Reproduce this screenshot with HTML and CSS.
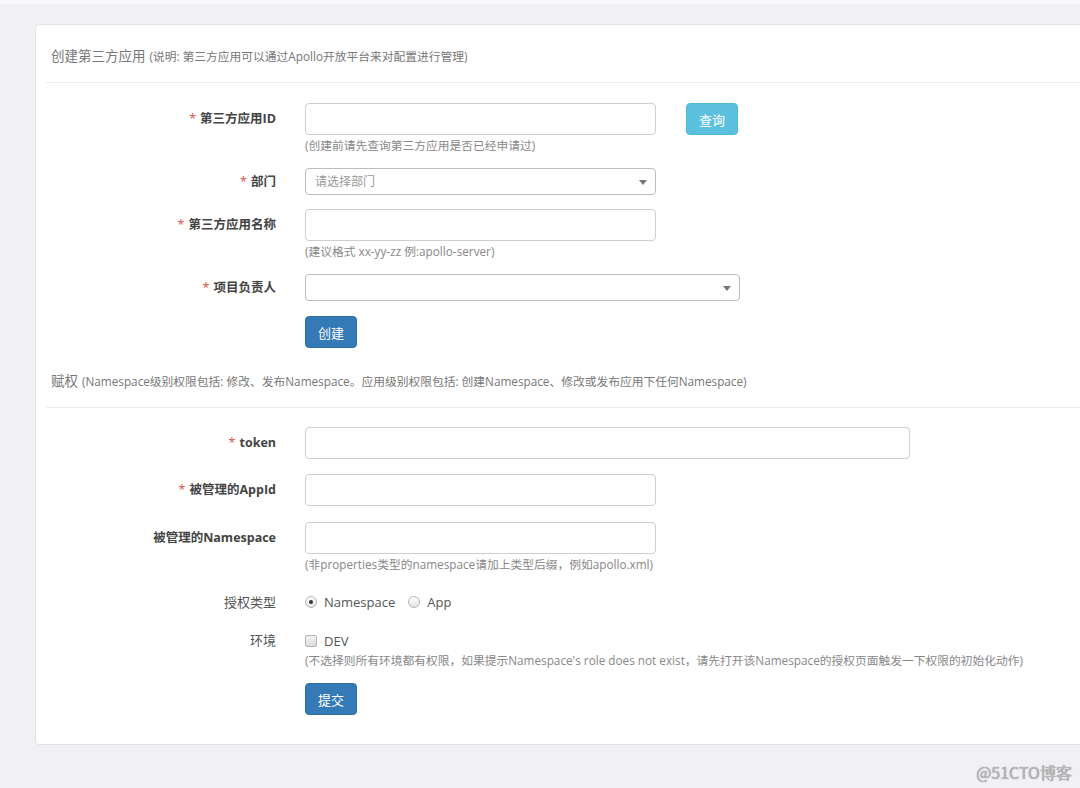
FILE: index.html
```html
<!DOCTYPE html>
<html lang="zh-CN">
<head>
<meta charset="utf-8">
<title>开放平台</title>
<link rel="stylesheet" href="styles.css">
</head>
<body>
<div class="topbar"></div>
<div class="card">
  <div class="section-title"><span class="title-main">创建第三方应用</span> <small class="title-note">(说明: 第三方应用可以通过Apollo开放平台来对配置进行管理)</small></div>
  <form class="form">
    <div class="form-row">
      <label class="form-label req">第三方应用ID</label>
      <div class="form-field">
        <div class="inline">
          <input class="input w-md" type="text">
          <button type="button" class="btn btn-info">查询</button>
        </div>
        <p class="help">(创建前请先查询第三方应用是否已经申请过)</p>
      </div>
    </div>
    <div class="form-row select-row">
      <label class="form-label req sel">部门</label>
      <div class="form-field">
        <div class="select w-md"><span class="placeholder">请选择部门</span><span class="caret"></span></div>
      </div>
    </div>
    <div class="form-row">
      <label class="form-label req">第三方应用名称</label>
      <div class="form-field">
        <input class="input w-md" type="text">
        <p class="help">(建议格式 xx-yy-zz 例:apollo-server)</p>
      </div>
    </div>
    <div class="form-row">
      <label class="form-label req sel">项目负责人</label>
      <div class="form-field">
        <div class="select w-lg"><span class="caret"></span></div>
      </div>
    </div>
    <div class="form-row last">
      <span></span>
      <div class="form-field"><button type="button" class="btn btn-primary">创建</button></div>
    </div>
  </form>

  <div class="section-title second"><span class="title-main">赋权</span> <small class="title-note">(Namespace级别权限包括: 修改、发布Namespace。应用级别权限包括: 创建Namespace、修改或发布应用下任何Namespace)</small></div>
  <form class="form second">
    <div class="form-row">
      <label class="form-label req">token</label>
      <div class="form-field"><input class="input w-xl" type="text"></div>
    </div>
    <div class="form-row appid-row">
      <label class="form-label req">被管理的AppId</label>
      <div class="form-field"><input class="input w-md" type="text"></div>
    </div>
    <div class="form-row">
      <label class="form-label">被管理的Namespace</label>
      <div class="form-field">
        <input class="input w-md" type="text">
        <p class="help">(非properties类型的namespace请加上类型后缀，例如apollo.xml)</p>
      </div>
    </div>
    <div class="form-row radio-row">
      <label class="form-label light">授权类型</label>
      <div class="form-field choices">
        <span class="choice"><span class="radio checked"></span>Namespace</span>
        <span class="choice"><span class="radio"></span>App</span>
      </div>
    </div>
    <div class="form-row env-row">
      <label class="form-label light">环境</label>
      <div class="form-field">
        <span class="choice"><span class="checkbox"></span>DEV</span>
        <p class="help tight">(不选择则所有环境都有权限，如果提示Namespace's role does not exist，请先打开该Namespace的授权页面触发一下权限的初始化动作)</p>
      </div>
    </div>
    <div class="form-row last">
      <span></span>
      <div class="form-field"><button type="button" class="btn btn-primary">提交</button></div>
    </div>
  </form>
</div>
<div class="footer"><span class="watermark">@51CTO博客</span></div>
</body>
</html>
```
FILE: styles.css
```css
html, body {
  margin: 0;
  padding: 0;
}
body {
  background: #f0f0f5;
  font-family: "Open Sans", "Noto Sans CJK SC", sans-serif;
  color: #555;
  width: 1080px;
  height: 788px;
  overflow: hidden;
}
.topbar {
  height: 4px;
  background: #f9f9fb;
}
.card {
  margin: 20px 0 0 35px;
  width: 1070px;
  background: #fff;
  border: 1px solid #e2e2e8;
  border-radius: 4px;
  padding: 0 0 29px 10px;
  box-sizing: border-box;
}
.section-title {
  display: flex;
  align-items: baseline;
  gap: 4px;
  height: 16px;
  padding: 23px 0 18px 5px;
  line-height: 16px;
  border-bottom: 1px solid #ededf0;
  color: #777;
  white-space: nowrap;
}
.section-title.second {
  padding-top: 25px;
}
.title-main {
  font-size: 13.5px;
  line-height: 16px;
}
.title-note {
  font-size: 11.75px;
  line-height: 16px;
}
.form {
  margin: 20px 0 0 0;
}
.form.second {
  margin-top: 19px;
}
.form-row {
  display: grid;
  grid-template-columns: 230px 1fr;
  column-gap: 29px;
  margin-bottom: 15px;
}
.form-row.select-row {
  margin-bottom: 14px;
}
.form-row.appid-row {
  margin-bottom: 16px;
}
.form-row.last {
  margin-bottom: 0;
}
.form-label {
  text-align: right;
  font-size: 12.5px;
  font-weight: 700;
  color: #444;
  line-height: 32px;
  white-space: nowrap;
}
.form-label.sel {
  line-height: 27px;
}
.form-label.light {
  font-weight: 400;
  font-size: 13px;
  color: #555;
}
.form-label.req::before {
  content: "*";
  color: #d9534f;
  margin-right: 4px;
  font-weight: 400;
}
.form-field {
  min-width: 0;
}
.inline {
  display: flex;
  align-items: center;
  gap: 30px;
}
.input {
  display: block;
  height: 32px;
  box-sizing: border-box;
  border: 1px solid #cfcfcf;
  border-radius: 4px;
  background: #fff;
  margin: 0;
  padding: 0 9px;
  font: inherit;
}
.w-md { width: 351px; }
.w-lg { width: 435px; }
.w-xl { width: 605px; }
.select {
  position: relative;
  height: 27px;
  box-sizing: border-box;
  border: 1px solid #bdbdbd;
  border-radius: 4px;
  background: #fff;
  padding-left: 9px;
  line-height: 25px;
  font-size: 12px;
}
.placeholder {
  color: #999;
}
.caret {
  position: absolute;
  right: 8px;
  top: 11px;
  width: 0;
  height: 0;
  border-left: 4px solid transparent;
  border-right: 4px solid transparent;
  border-top: 5px solid #777;
}
.help {
  margin: 2px 0 0 0;
  font-size: 11.75px;
  line-height: 16px;
  color: #888;
  white-space: nowrap;
}
.help.tight {
  margin-top: 0;
}
.btn {
  height: 32px;
  width: 52px;
  box-sizing: border-box;
  border-radius: 4px;
  color: #fff;
  font-family: inherit;
  font-size: 13px;
  padding: 0;
  cursor: pointer;
}
.btn-info {
  background: #5bc0de;
  border: 1px solid #4fb8d8;
}
.btn-primary {
  background: #337ab7;
  border: 1px solid #2e6da4;
  display: block;
}
.radio-row .form-label {
  line-height: 30px;
}
.choices {
  display: flex;
  align-items: center;
  height: 30px;
  gap: 13px;
}
.choice {
  display: inline-flex;
  align-items: center;
  gap: 7px;
  font-size: 13px;
  color: #555;
  line-height: 20px;
}
.radio {
  width: 12px;
  height: 12px;
  box-sizing: border-box;
  border: 1px solid #b5b5b5;
  border-radius: 50%;
  background: linear-gradient(#fdfdfd, #e6e6e6);
  position: relative;
}
.radio.checked::after {
  content: "";
  position: absolute;
  left: 3px;
  top: 3px;
  width: 4px;
  height: 4px;
  border-radius: 50%;
  background: #333;
}
.checkbox {
  width: 12px;
  height: 12px;
  box-sizing: border-box;
  border: 1px solid #b5b5b5;
  border-radius: 2px;
  background: linear-gradient(#f2f2f2, #dcdcdc);
}
.env-row {
  margin-top: -2px;
  margin-bottom: 15px;
}
.env-row .form-label {
  line-height: 20px;
}
.footer {
  display: flex;
  justify-content: flex-end;
  padding: 17px 8px 0 0;
}
.watermark {
  font-family: "Noto Sans CJK SC", sans-serif;
  font-size: 16px;
  line-height: 20px;
  color: #b8b8b8;
  text-shadow: 0 0 1px #777;
}
```
